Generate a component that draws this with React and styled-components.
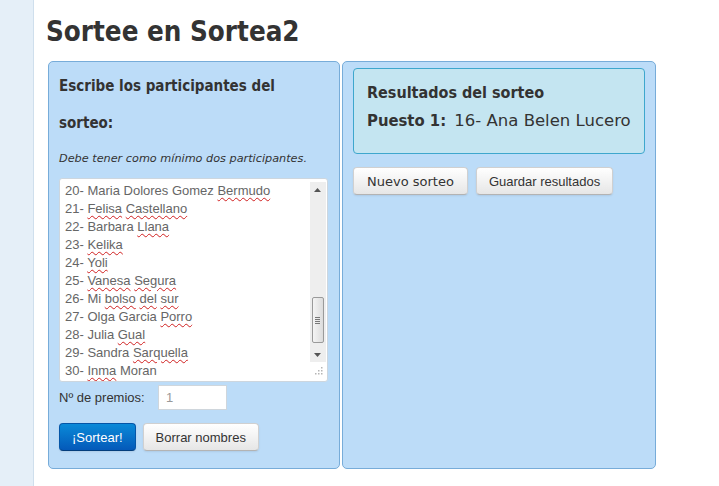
import React from 'react';
import styled, {createGlobalStyle} from "styled-components";

const GlobalStyle = createGlobalStyle`
  html, body {
    margin: 0;
    padding: 0;
    background: #ffffff;
    font-family: "Liberation Sans", Arial, sans-serif;
    color: #333333;
  }
`;

const Page = styled.div`
  display: flex;
  width: 719px;
  height: 486px;
  overflow: hidden;
`;

const Sidebar = styled.div`
  width: 33px;
  flex-shrink: 0;
  background: #e5eff8;
  border-right: 1px solid #cfdfed;
`;

const Main = styled.div`
  flex: 1;
  padding: 0 0 0 14px;
`;

const Title = styled.h1`
  margin: 0;
  padding: 13px 0 0 0;
  margin-left: -2px;
  height: 61px;
  box-sizing: border-box;
  font-family: "DejaVu Sans Condensed", "DejaVu Sans", sans-serif;
  font-weight: bold;
  font-size: 27.5px;
  line-height: 36px;
  color: #333333;
`;

const Columns = styled.div`
  display: flex;
  gap: 2px;
  align-items: stretch;
`;

const Panel = styled.div`
  width: ${p => p.$width}px;
  height: 408px;
  box-sizing: border-box;
  background: #bcdcf8;
  border: 1px solid #77acd9;
  border-radius: 5px;
  padding: ${p => p.$pad};
`;

const Heading = styled.h3`
  margin: 0;
  font-family: "DejaVu Sans Condensed", "DejaVu Sans", sans-serif;
  font-weight: bold;
  font-size: 15px;
  line-height: 37px;
  color: #333333;
`;

const Hint = styled.p`
  margin: 9px 0 11px 0;
  font-family: "DejaVu Sans", sans-serif;
  font-style: italic;
  font-size: 11.25px;
  line-height: 16px;
  color: #333333;
`;

const TextBox = styled.div`
  display: flex;
  width: 269px;
  height: 204px;
  box-sizing: border-box;
  background: #ffffff;
  border: 1px solid #cdd6de;
  border-radius: 3px;
  overflow: hidden;
`;

const Lines = styled.div`
  flex: 1;
  padding: 3px 0 0 5px;
  font-family: "Liberation Sans", Arial, sans-serif;
  font-size: 13px;
  line-height: 18px;
  color: #666666;
  white-space: nowrap;
`;

const Typo = styled.span`
  text-decoration: underline wavy #d02020;
  text-decoration-thickness: 1px;
  text-underline-offset: 2px;
`;

const ScrollArea = styled.div`
  width: 19px;
  display: flex;
  flex-direction: column;
  align-items: center;
  padding-top: 3px;
`;

const ScrollBar = styled.div`
  width: 16px;
  height: 180px;
  background: #eeeeee;
  display: flex;
  flex-direction: column;
  align-items: center;
`;

const Arrow = styled.div`
  height: 15px;
  display: flex;
  align-items: center;
  justify-content: center;
`;

const Track = styled.div`
  flex: 1;
  display: flex;
  flex-direction: column;
  justify-content: flex-end;
  padding-bottom: 4px;
`;

const Thumb = styled.div`
  width: 12px;
  height: 46px;
  box-sizing: border-box;
  border: 1px solid #9a9a9a;
  border-radius: 2px;
  background: linear-gradient(to right, #f4f4f4, #dcdcdc);
  display: flex;
  flex-direction: column;
  align-items: center;
  justify-content: center;
  gap: 1px;
`;

const GripLine = styled.div`
  width: 5px;
  height: 1px;
  background: #777777;
`;

const Resizer = styled.div`
  margin-top: 4px;
  margin-left: 2px;
  display: flex;
`;

const FieldRow = styled.div`
  display: flex;
  align-items: center;
  margin-top: 3px;
  height: 25px;
`;

const Label = styled.label`
  width: 99px;
  font-family: "Liberation Sans", Arial, sans-serif;
  font-size: 13px;
  color: #333333;
`;

const NumberInput = styled.div`
  width: 69px;
  height: 25px;
  box-sizing: border-box;
  background: #ffffff;
  border: 1px solid #cfd6dc;
  padding: 4px 7px;
  font-family: "Liberation Sans", Arial, sans-serif;
  font-size: 13px;
  color: #999999;
`;

const ButtonRow = styled.div`
  display: flex;
  gap: ${p => p.$gap}px;
  margin-top: ${p => p.$top}px;
`;

const Button = styled.button`
  height: 28px;
  box-sizing: border-box;
  padding: 0 ${p => p.$px}px;
  border-radius: 4px;
  font-family: ${p => p.$dejavu ? '"DejaVu Sans", sans-serif' : '"Liberation Sans", Arial, sans-serif'};
  font-size: 13px;
  color: #333333;
  background: linear-gradient(to bottom, #ffffff, #e6e6e6);
  border: 1px solid #d0d0d0;
  border-bottom-color: #b3b3b3;
  box-shadow: 0 1px 2px rgba(0, 0, 0, 0.08);
  cursor: pointer;
`;

const PrimaryButton = styled(Button)`
  color: #ffffff;
  background: linear-gradient(to bottom, #0a8ad8, #0459b9);
  border: 1px solid #0456a8;
  border-bottom-color: #033d7c;
`;

const Alert = styled.div`
  height: 86px;
  box-sizing: border-box;
  background: #c4e5f1;
  border: 1px solid #3ea7cd;
  border-radius: 4px;
  padding: 11px 13px;
`;

const AlertTitle = styled.h4`
  margin: 0;
  font-family: "DejaVu Sans Condensed", "DejaVu Sans", sans-serif;
  font-weight: bold;
  font-size: 16px;
  line-height: 26px;
  color: #333333;
`;

const Winner = styled.p`
  margin: 0;
  font-family: "DejaVu Sans", sans-serif;
  font-size: 16.5px;
  line-height: 29px;
  color: #333333;

  strong {
    font-family: "DejaVu Sans Condensed", "DejaVu Sans", sans-serif;
    font-weight: bold;
    font-size: 16.5px;
    margin-right: 3px;
  }
`;

const participants = [
  ["20- Maria Dolores Gomez ", <Typo key="t">Bermudo</Typo>],
  ["21- ", <Typo key="a">Felisa</Typo>, " ", <Typo key="b">Castellano</Typo>],
  ["22- Barbara ", <Typo key="t">Llana</Typo>],
  ["23- ", <Typo key="t">Kelika</Typo>],
  ["24- ", <Typo key="t">Yoli</Typo>],
  ["25- ", <Typo key="a">Vanesa</Typo>, " ", <Typo key="b">Segura</Typo>],
  ["26- Mi ", <Typo key="a">bolso</Typo>, " ", <Typo key="b">del</Typo>, " ", <Typo key="c">sur</Typo>],
  ["27- Olga Garcia ", <Typo key="t">Porro</Typo>],
  ["28- Julia ", <Typo key="t">Gual</Typo>],
  ["29- Sandra ", <Typo key="t">Sarquella</Typo>],
  ["30- ", <Typo key="t">Inma</Typo>, " Moran"],
];

const App = () => {
  return (
    <Page>
      <GlobalStyle/>
      <Sidebar/>
      <Main>
        <Title>Sortee en Sortea2</Title>
        <Columns>
          <Panel $width={292} $pad="6px 10px 0 10px">
            <Heading>Escribe los participantes del<br/>sorteo:</Heading>
            <Hint>Debe tener como mínimo dos participantes.</Hint>
            <TextBox>
              <Lines>
                {participants.map((line, i) => <div key={i}>{line}</div>)}
              </Lines>
              <ScrollArea>
                <ScrollBar>
                  <Arrow>
                    <svg width="7" height="4" viewBox="0 0 7 4"><path d="M0 4 L3.5 0 L7 4 Z" fill="#555"/></svg>
                  </Arrow>
                  <Track>
                    <Thumb>
                      <GripLine/><GripLine/><GripLine/><GripLine/>
                    </Thumb>
                  </Track>
                  <Arrow>
                    <svg width="7" height="4" viewBox="0 0 7 4"><path d="M0 0 L3.5 4 L7 0 Z" fill="#555"/></svg>
                  </Arrow>
                </ScrollBar>
                <Resizer>
                  <svg width="9" height="9" viewBox="0 0 9 9" fill="#b5b5b5">
                    <rect x="7" y="1" width="1.5" height="1.5"/>
                    <rect x="4" y="4" width="1.5" height="1.5"/>
                    <rect x="7" y="4" width="1.5" height="1.5"/>
                    <rect x="1" y="7" width="1.5" height="1.5"/>
                    <rect x="4" y="7" width="1.5" height="1.5"/>
                    <rect x="7" y="7" width="1.5" height="1.5"/>
                  </svg>
                </Resizer>
              </ScrollArea>
            </TextBox>
            <FieldRow>
              <Label>Nº de premios:</Label>
              <NumberInput>1</NumberInput>
            </FieldRow>
            <ButtonRow $top={13} $gap={7}>
              <PrimaryButton $px={12}>¡Sortear!</PrimaryButton>
              <Button $px={12}>Borrar nombres</Button>
            </ButtonRow>
          </Panel>
          <Panel $width={314} $pad="6px 10px 0 10px">
            <Alert>
              <AlertTitle>Resultados del sorteo</AlertTitle>
              <Winner><strong>Puesto 1:</strong> 16- Ana Belen Lucero</Winner>
            </Alert>
            <ButtonRow $top={13} $gap={8}>
              <Button $px={13} $dejavu>Nuevo sorteo</Button>
              <Button $px={12}>Guardar resultados</Button>
            </ButtonRow>
          </Panel>
        </Columns>
      </Main>
    </Page>
  );
};

export default App;
